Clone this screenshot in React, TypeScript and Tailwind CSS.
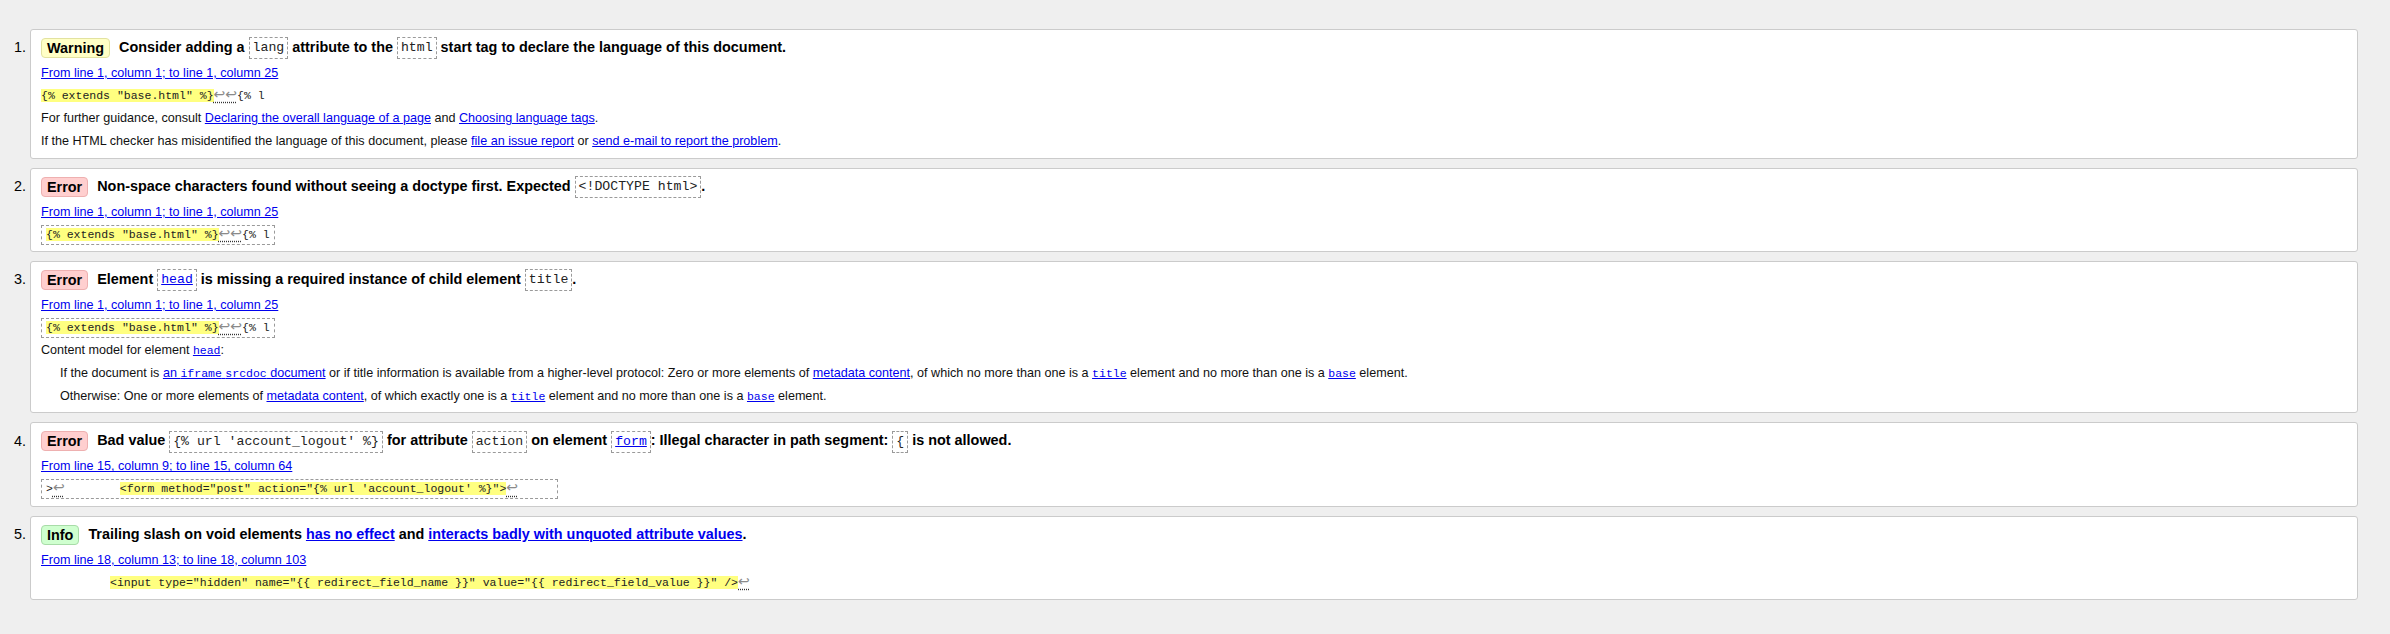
import React from "react";

type Kind = "warning" | "error" | "info";

const sans = "font-['Liberation_Sans',Arial,sans-serif]";
const mono = "font-['Liberation_Mono','DejaVu_Sans_Mono',monospace]";

function Badge({ kind }: { kind: Kind }) {
  const styles: Record<Kind, string> = {
    warning: "bg-[#ffffc6] border-[#e2e2a0]",
    error: "bg-[#ffcfcf] border-[#eeb0b0]",
    info: "bg-[#cfffcf] border-[#a8dca8]",
  };
  const label = { warning: "Warning", error: "Error", info: "Info" }[kind];
  return (
    <span
      className={`inline-block shrink-0 h-[20px] leading-[18px] px-[5px] rounded-[4px] border font-bold text-[14.4px] text-black ${styles[kind]}`}
    >
      {label}
    </span>
  );
}

// dashed code box used inside the message titles
function Code({ children, link }: { children: React.ReactNode; link?: boolean }) {
  return (
    <code
      className={`inline-block align-middle border border-dashed border-[#9a9a9a] px-[3px] leading-[20px] text-[13.2px] font-normal text-[#222] ${mono}`}
    >
      {link ? <a className="text-[#0000ee] underline">{children}</a> : children}
    </code>
  );
}

function A({ children, bold }: { children: React.ReactNode; bold?: boolean }) {
  return <a className={`text-[#0000ee] underline ${bold ? "font-bold" : ""}`}>{children}</a>;
}

function MonoLink({ children }: { children: React.ReactNode }) {
  return <a className={`text-[#0000ee] underline text-[11.5px] leading-none ${mono}`}>{children}</a>;
}

function Ret({ count = 1 }: { count?: number }) {
  return (
    <span className="font-['DejaVu_Sans',sans-serif] text-[14px] leading-none text-[#8a8a8a] underline decoration-dotted decoration-[#333] underline-offset-[3px]">
      {"↩".repeat(count)}
    </span>
  );
}

function Mark({ children }: { children: React.ReactNode }) {
  return <span className="bg-[#ffff80]">{children}</span>;
}

function Extract({ children, boxed }: { children: React.ReactNode; boxed?: boolean }) {
  return (
    <div className="h-[22.68px] flex items-center">
      <span
        className={`whitespace-pre text-[11.5px] leading-[18px] text-[#222] ${mono} ${
          boxed ? "inline-block border border-dashed border-[#9a9a9a] px-[4px]" : ""
        }`}
      >
        {children}
      </span>
    </div>
  );
}

function Location({ children }: { children: React.ReactNode }) {
  return (
    <div className="leading-[22.68px]">
      <a className="text-[#0000ee] underline">{children}</a>
    </div>
  );
}

function Item({
  n,
  kind,
  title,
  children,
}: {
  n: number;
  kind: Kind;
  title: React.ReactNode;
  children: React.ReactNode;
}) {
  return (
    <div className="flex">
      <div className="w-[30px] shrink-0 pt-[5px]">
        <div className="h-[28px] flex items-center justify-end text-[14.4px] text-black">
          {n}.{"\u00a0"}
        </div>
      </div>
      <div className="flex-1 bg-white border border-[#cbcbcb] rounded-[3px] pt-[4px] pb-[5px] px-[10px]">
        <div className="h-[28px] flex items-center">
          <Badge kind={kind} />
          <span className="ml-[9px] font-bold text-[14.4px] text-black whitespace-nowrap">{title}</span>
        </div>
        <div className="text-[12.6px] text-[#111] leading-[22.68px]">{children}</div>
      </div>
    </div>
  );
}

export default function App() {
  return (
    <div className={`min-h-screen bg-[#efefef] pt-[29px] pr-[32px] pb-[20px] ${sans}`}>
      <div className="flex flex-col gap-[9px]">
        <Item
          n={1}
          kind="warning"
          title={
            <>
              Consider adding a <Code>lang</Code> attribute to the <Code>html</Code> start tag to declare the
              language of this document.
            </>
          }
        >
          <Location>From line 1, column 1; to line 1, column 25</Location>
          <Extract>
            <Mark>{'{% extends "base.html" %}'}</Mark>
            <Ret count={2} />
            {"{% l"}
          </Extract>
          <p className="h-[22.68px]">
            For further guidance, consult <A>Declaring the overall language of a page</A> and{" "}
            <A>Choosing language tags</A>.
          </p>
          <p className="h-[22.68px]">
            If the HTML checker has misidentified the language of this document, please{" "}
            <A>file an issue report</A> or <A>send e-mail to report the problem</A>.
          </p>
        </Item>

        <Item
          n={2}
          kind="error"
          title={
            <>
              Non-space characters found without seeing a doctype first. Expected <Code>{"<!DOCTYPE html>"}</Code>.
            </>
          }
        >
          <Location>From line 1, column 1; to line 1, column 25</Location>
          <Extract boxed>
            <Mark>{'{% extends "base.html" %}'}</Mark>
            <Ret count={2} />
            {"{% l"}
          </Extract>
        </Item>

        <Item
          n={3}
          kind="error"
          title={
            <>
              Element <Code link>head</Code> is missing a required instance of child element <Code>title</Code>.
            </>
          }
        >
          <Location>From line 1, column 1; to line 1, column 25</Location>
          <Extract boxed>
            <Mark>{'{% extends "base.html" %}'}</Mark>
            <Ret count={2} />
            {"{% l"}
          </Extract>
          <p className="h-[22.68px]">
            Content model for element <MonoLink>head</MonoLink>:
          </p>
          <p className="h-[22.68px] ml-[19px]">
            If the document is{" "}
            <a className="text-[#0000ee] underline">
              an <span className={`text-[11.5px] leading-none ${mono}`}>iframe</span>{" "}
              <span className={`text-[11.5px] leading-none ${mono}`}>srcdoc</span> document
            </a>{" "}
            or if title information is available from a higher-level protocol: Zero or more elements of{" "}
            <A>metadata content</A>, of which no more than one is a <MonoLink>title</MonoLink> element and no more
            than one is a <MonoLink>base</MonoLink> element.
          </p>
          <p className="h-[22.68px] ml-[19px]">
            Otherwise: One or more elements of <A>metadata content</A>, of which exactly one is a{" "}
            <MonoLink>title</MonoLink> element and no more than one is a <MonoLink>base</MonoLink> element.
          </p>
        </Item>

        <Item
          n={4}
          kind="error"
          title={
            <>
              Bad value <Code>{"{% url 'account_logout' %}"}</Code> for attribute <Code>action</Code> on element{" "}
              <Code link>form</Code>: Illegal character in path segment: <Code>{"{"}</Code> is not allowed.
            </>
          }
        >
          <Location>From line 15, column 9; to line 15, column 64</Location>
          <Extract boxed>
            {">"}
            <Ret />
            {"        "}
            <Mark>{`<form method="post" action="{% url 'account_logout' %}">`}</Mark>
            <Ret />
            {"     "}
          </Extract>
        </Item>

        <Item
          n={5}
          kind="info"
          title={
            <>
              Trailing slash on void elements <A bold>has no effect</A> and{" "}
              <A bold>interacts badly with unquoted attribute values</A>.
            </>
          }
        >
          <Location>From line 18, column 13; to line 18, column 103</Location>
          <Extract>
            {"          "}
            <Mark>{`<input type="hidden" name="{{ redirect_field_name }}" value="{{ redirect_field_value }}" />`}</Mark>
            <Ret />
          </Extract>
        </Item>
      </div>
    </div>
  );
}
